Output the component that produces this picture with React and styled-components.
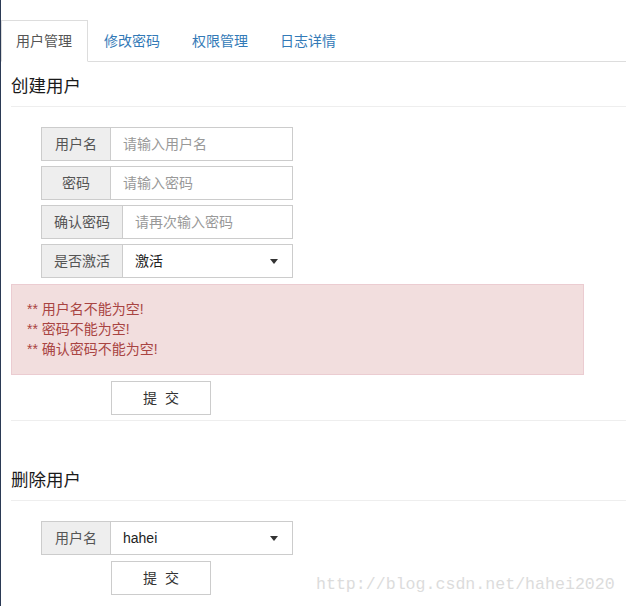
import React from "react";
import styled, {createGlobalStyle} from "styled-components";

const tabs = ["用户管理", "修改密码", "权限管理", "日志详情"];
const errors = ["用户名不能为空!", "密码不能为空!", "确认密码不能为空!"];

export default function App() {
    return (
        <>
            <GlobalStyle/>
            <Page>
                <Tabs>
                    {tabs.map((t, i) => (
                        <Tab key={t} $active={i === 0}>{t}</Tab>
                    ))}
                </Tabs>
                <Panel>
                    <SectionTitle>创建用户</SectionTitle>
                    <Form>
                        <Group>
                            <Addon $width={69}>用户名</Addon>
                            <Field placeholder="请输入用户名"/>
                        </Group>
                        <Group>
                            <Addon $width={69}>密码</Addon>
                            <Field placeholder="请输入密码" type="password"/>
                        </Group>
                        <Group>
                            <Addon $width={81}>确认密码</Addon>
                            <Field placeholder="请再次输入密码" type="password"/>
                        </Group>
                        <Group>
                            <Addon $width={81}>是否激活</Addon>
                            <Select>
                                激活
                                <Caret/>
                            </Select>
                        </Group>
                    </Form>
                    <Alert>
                        {errors.map((e) => (
                            <p key={e}>** {e}</p>
                        ))}
                    </Alert>
                    <Submit>提&nbsp;&nbsp;交</Submit>
                    <Divider/>

                    <SectionTitle $top={49}>删除用户</SectionTitle>
                    <Form>
                        <Group>
                            <Addon $width={69}>用户名</Addon>
                            <Select>
                                hahei
                                <Caret/>
                            </Select>
                        </Group>
                    </Form>
                    <Submit>提&nbsp;&nbsp;交</Submit>
                </Panel>
                <Watermark>http://blog.csdn.net/hahei2020</Watermark>
            </Page>
        </>
    );
}

const GlobalStyle = createGlobalStyle`
  html, body {
    margin: 0;
    padding: 0;
    background: #fff;
  }

  body {
    font-family: "Liberation Sans", "Noto Sans CJK SC", sans-serif;
    font-size: 14px;
    line-height: 20px;
    color: #333;
  }

  * {
    box-sizing: border-box;
  }
`;

const Page = styled.div`
  position: relative;
  min-height: 606px;
  padding-top: 20px;
  border-left: 1px solid #2b3a55;
`;

const Tabs = styled.ul`
  display: flex;
  margin: 0;
  padding: 0;
  list-style: none;
  border-bottom: 1px solid #ddd;
`;

const Tab = styled.li`
  margin: 0 1px -1px 0;
  padding: 10px 15px 10px 14px;
  border: 1px solid ${(p) => (p.$active ? "#ddd" : "transparent")};
  border-bottom-color: ${(p) => (p.$active ? "#fff" : "transparent")};
  background: ${(p) => (p.$active ? "#fff" : "transparent")};
  color: ${(p) => (p.$active ? "#555" : "#337ab7")};
  cursor: pointer;
`;

const Panel = styled.div`
  padding-left: 10px;
`;

const SectionTitle = styled.h3`
  margin: ${(p) => p.$top ?? 14}px 0 0;
  padding-bottom: 10px;
  font-size: 17.5px;
  font-weight: 400;
  line-height: 20px;
  color: #1a1a1a;
  border-bottom: 1px solid #eee;
`;

const Form = styled.div`
  display: flex;
  flex-direction: column;
  gap: 5px;
  margin: 20px 0 0 30px;
`;

const Group = styled.div`
  display: flex;
  width: 252px;
  height: 34px;
`;

const Addon = styled.span`
  display: flex;
  align-items: center;
  justify-content: center;
  flex: none;
  width: ${(p) => p.$width}px;
  background: #eee;
  border: 1px solid #ccc;
  border-right: 0;
  color: #555;
`;

const Field = styled.input`
  flex: 1;
  min-width: 0;
  padding: 6px 12px;
  border: 1px solid #ccc;
  font: inherit;
  color: #555;
  outline: none;

  &::placeholder {
    color: #999;
  }
`;

const Select = styled.div`
  flex: 1;
  display: flex;
  align-items: center;
  justify-content: space-between;
  padding: 0 14px 0 12px;
  border: 1px solid #ccc;
  color: #222;
`;

const Caret = styled.span`
  width: 0;
  height: 0;
  border-left: 4px solid transparent;
  border-right: 4px solid transparent;
  border-top: 5px solid #333;
`;

const Alert = styled.div`
  width: 573px;
  margin-top: 6px;
  padding: 14px 15px 15px;
  background: #f2dede;
  border: 1px solid #ebccd1;
  color: #a94442;

  p {
    margin: 0;
  }
`;

const Submit = styled.button`
  display: block;
  width: 100px;
  height: 34px;
  margin: 6px 0 0 100px;
  padding: 0;
  background: #fff;
  border: 1px solid #ccc;
  border-radius: 0;
  font: inherit;
  color: #333;
`;

const Divider = styled.hr`
  margin: 5px 0 0;
  border: 0;
  border-top: 1px solid #eee;
`;

const Watermark = styled.div`
  position: absolute;
  left: 315px;
  top: 574px;
  font-family: "Liberation Mono", "DejaVu Sans Mono", monospace;
  font-size: 16.6px;
  line-height: 22px;
  color: #dcdcdc;
  pointer-events: none;
`;
